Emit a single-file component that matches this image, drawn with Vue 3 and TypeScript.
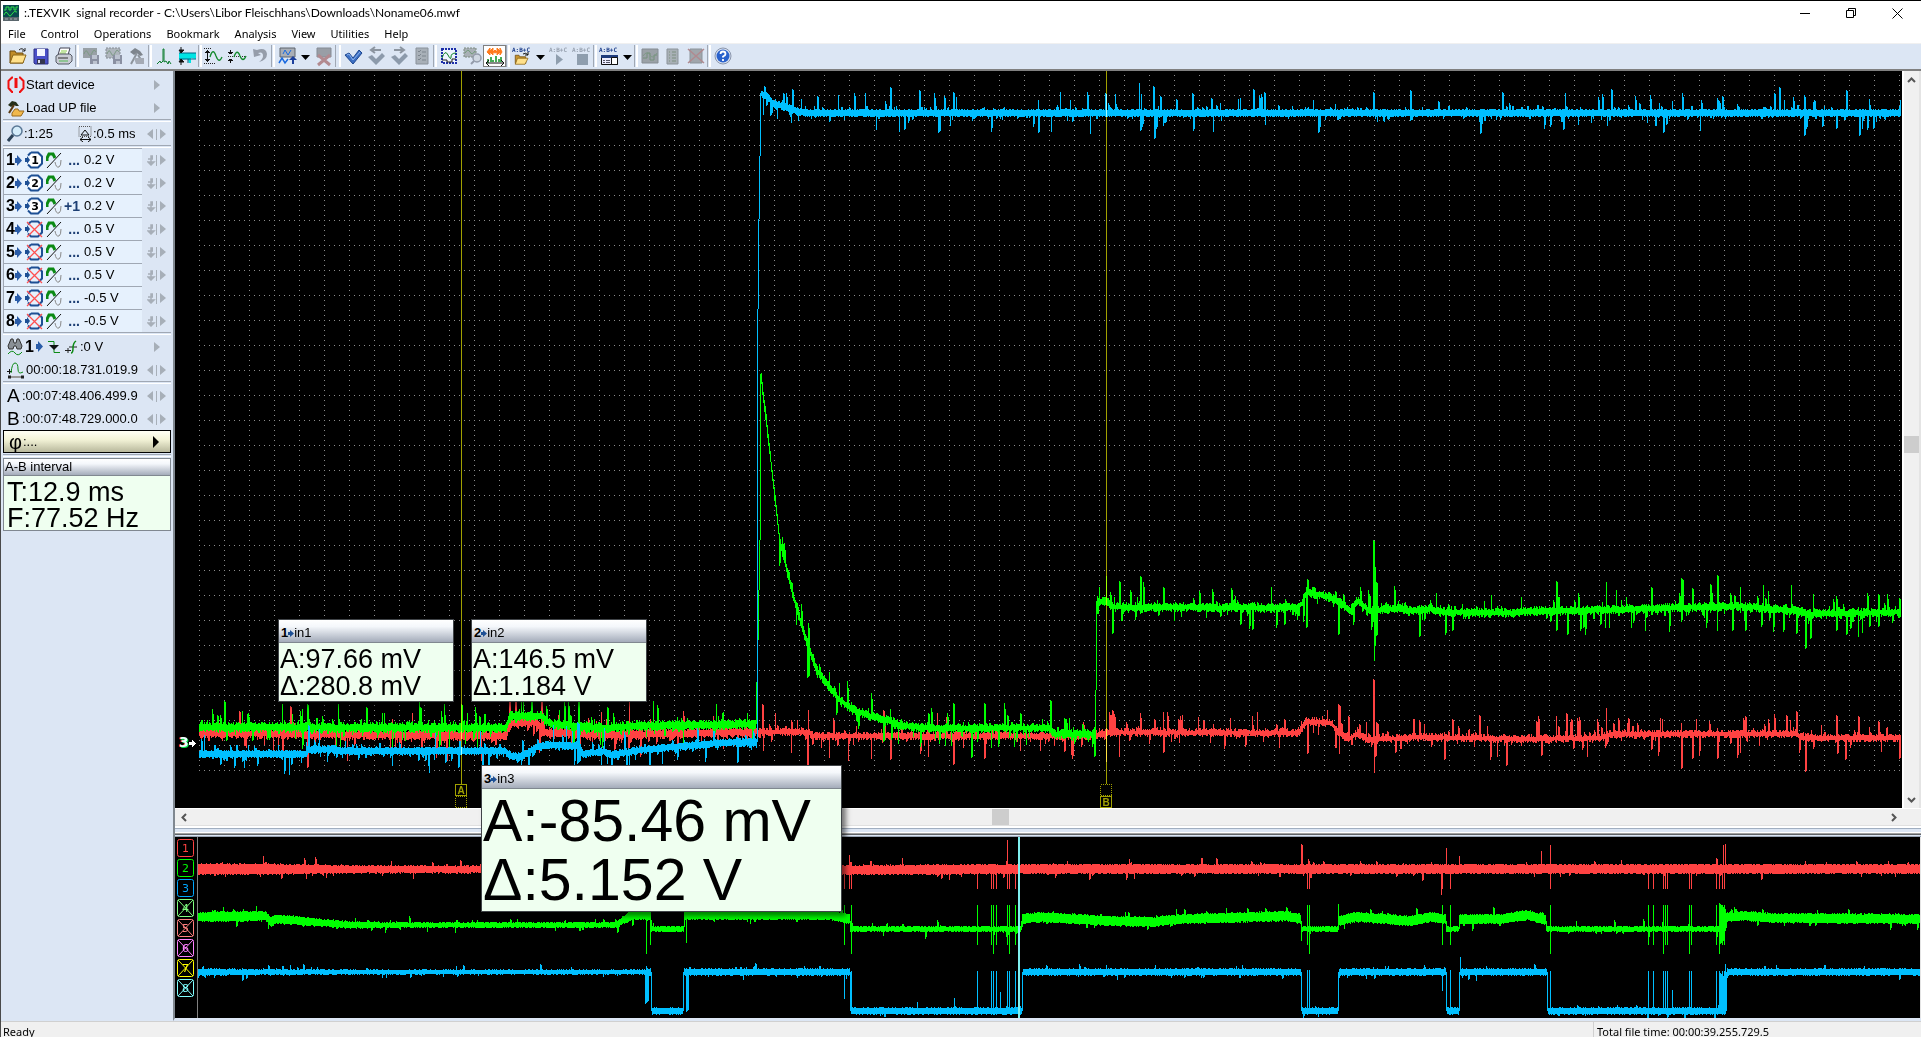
<script setup lang="ts">
type Point = [number, number]
type Spike = [number, number, number?]

interface TraceOptions {
  seed: number
  points: Point[]
  from: number
  to: number
  half: Point[]
  jitter: number
  rate: number
  reach: number
  spikes?: Spike[]
  step?: boolean
}

/* Small deterministic generator, so that the signals look the same on every load. */
function makeRandom(seed: number): () => number {
  let s = seed
  return () => {
    s = (s * 1664525 + 1013904223) % 4294967296
    return s / 4294967296
  }
}

function levelAt(points: Point[], x: number, step = false): number {
  for (let i = 1; i < points.length; i++) {
    const a = points[i - 1]
    const b = points[i]
    if (x < b[0]) return step ? a[1] : a[1] + ((b[1] - a[1]) * (x - a[0])) / (b[0] - a[0])
  }
  return points[points.length - 1][1]
}

/* One vertical stroke per pixel column: band, jitter, random peaks and the listed spikes. */
function trace(o: TraceOptions): string {
  const rnd = makeRandom(o.seed)
  const tops: number[] = []
  const bottoms: number[] = []
  let prev = levelAt(o.points, o.from, o.step)
  let carry = 0
  for (let x = o.from; x < o.to; x++) {
    const y = levelAt(o.points, x, o.step)
    const half = levelAt(o.half, x)
    let top = Math.min(y, (y + prev) / 2) - half - rnd() * o.jitter
    let bottom = Math.max(y, (y + prev) / 2) + half + rnd() * o.jitter
    let len = carry * 0.8
    carry = 0
    if (len === 0 && rnd() < o.rate) {
      const r = rnd()
      len = (2 + r * r * r * o.reach) * (rnd() < 0.5 ? -1 : 1)
      if (rnd() < 0.6) carry = len
    }
    if (len < 0) top += len
    else bottom += len
    if (Math.abs(y - prev) > 20) {
      top = Math.min(y, prev)
      bottom = Math.max(y, prev)
    }
    prev = y
    tops.push(top)
    bottoms.push(bottom)
  }
  for (const [x, y, w] of o.spikes ?? []) {
    for (let k = 0; k < (w ?? 2); k++) {
      const i = x - o.from + k
      if (i < 0 || i >= tops.length) continue
      tops[i] = Math.min(tops[i], y + k)
      bottoms[i] = Math.max(bottoms[i], y - k)
    }
  }
  return tops.map((t, i) => `M${o.from + i + 0.5} ${Math.round(t)}V${Math.round(bottoms[i])}`).join('')
}

const red = '#ff4242'
const green = '#00ff00'
const blue = '#00bfff'

const redMain = trace({
  seed: 11, from: 199, to: 1901, half: [[199, 2.5], [755, 2.5], [765, 1.5], [1901, 1.5]], jitter: 3, rate: 0.26, reach: 20,
  points: [[199, 733], [505, 736], [510, 723], [535, 722], [543, 732], [600, 735], [755, 732], [808, 732], [812, 736], [1095, 736], [1107, 732], [1297, 733], [1306, 721], [1330, 723], [1338, 732], [1348, 739], [1357, 733], [1367, 740], [1420, 737], [1520, 739], [1600, 738], [1610, 734], [1795, 734], [1806, 738], [1901, 738]],
  spikes: [[239, 711], [290, 706], [307, 768], [446, 762], [509, 701], [541, 701], [629, 701, 1], [762, 704], [808, 710, 1], [807, 766], [791, 753, 1], [829, 758, 1], [883, 710], [890, 760], [928, 757, 1], [953, 765], [984, 759], [1020, 751, 1], [1064, 752], [1071, 755, 1], [1106, 762, 1], [1112, 710], [1119, 757, 1], [1163, 753], [1178, 719], [1230, 718, 1], [1252, 716, 1], [1284, 719], [1307, 754], [1338, 704, 3], [1348, 716], [1373, 679, 2], [1374, 773, 1], [1375, 757], [1376, 722, 3], [1395, 753], [1413, 719], [1444, 760], [1452, 719], [1479, 715], [1506, 766], [1536, 721], [1556, 716, 1], [1566, 713], [1571, 719], [1587, 757, 1], [1606, 708, 1], [1628, 718], [1651, 750], [1681, 769], [1692, 759], [1717, 759], [1740, 753, 1], [1745, 716], [1768, 722], [1786, 715], [1796, 711], [1805, 772], [1836, 715], [1845, 760], [1858, 716], [1878, 721], [1899, 759]],
})

const greenMain = trace({
  seed: 27, from: 199, to: 1901, half: [[199, 2.5], [755, 2.5], [765, 2], [1901, 2]], jitter: 3, rate: 0.28, reach: 20,
  points: [[199, 727], [505, 728], [510, 716], [540, 716], [550, 724], [600, 728], [640, 726], [754, 724], [755, 724], [757, 640], [759, 540], [760, 374], [766, 423], [772, 478], [779, 540], [791, 590], [800, 622], [808, 648], [816, 670], [829, 688], [839, 700], [852, 710], [873, 717], [888, 721], [904, 726], [930, 728], [1049, 728], [1053, 734], [1094, 734], [1095, 690], [1096, 601], [1107, 602], [1110, 607], [1295, 608], [1301, 604], [1306, 592], [1320, 595], [1332, 598], [1338, 603], [1350, 610], [1357, 601], [1364, 607], [1370, 611], [1400, 608], [1410, 611], [1430, 609], [1440, 612], [1510, 613], [1530, 611], [1600, 610], [1700, 607], [1740, 606], [1760, 608], [1800, 611], [1806, 614], [1901, 612]],
  spikes: [[224, 701], [302, 709, 1], [307, 704], [247, 714], [366, 707], [461, 704, 2], [467, 713, 1], [445, 715, 1], [564, 704, 1], [578, 701], [607, 707], [653, 701, 1], [791, 582], [807, 678, 3], [829, 672, 1], [839, 683, 1], [883, 742], [890, 709, 1], [928, 713], [953, 703], [971, 758], [984, 703], [1020, 713], [1050, 700, 2], [1094, 757], [1112, 634], [1119, 581], [1140, 576], [1163, 587], [1106, 576, 1], [1240, 625], [1252, 630], [1271, 587, 1], [1284, 625], [1307, 579, 2], [1306, 628], [1338, 635], [1373, 540, 2], [1374, 661, 1], [1375, 567, 1], [1375, 646, 1], [1376, 582], [1376, 636], [1419, 637], [1452, 631], [1556, 581], [1556, 631], [1567, 635], [1583, 628], [1606, 582, 1], [1651, 587], [1681, 578, 3], [1692, 588], [1710, 584], [1717, 575], [1740, 587, 1], [1732, 631], [1745, 631], [1768, 591, 1], [1791, 585, 1], [1796, 634], [1805, 649, 2], [1810, 639], [1836, 631], [1846, 635], [1858, 637, 1], [1878, 594], [1878, 627], [1899, 598]],
})

const blueMain = trace({
  seed: 5, from: 199, to: 1901, half: [[199, 2.5], [1901, 2.5]], jitter: 2, rate: 0.24, reach: 15,
  points: [[199, 754], [305, 754], [307, 750], [330, 749], [345, 751], [505, 751], [509, 756], [520, 757], [537, 747], [547, 745], [577, 746], [582, 754], [603, 751], [610, 755], [640, 750], [675, 747], [720, 743], [755, 742], [756, 742], [757, 309], [758, 219], [760, 93], [767, 97], [772, 103], [785, 107], [795, 111], [805, 113], [1901, 113]],
  spikes: [[244, 768, 1], [308, 725, 2], [319, 729, 1], [429, 773, 1], [458, 768, 2], [480, 731, 1], [553, 725, 1], [577, 722, 3], [577, 764, 4], [604, 728, 1], [607, 764, 1], [629, 765, 1], [737, 763, 2], [763, 115, 1], [777, 119, 1], [770, 116], [783, 93], [792, 89], [817, 96], [838, 95, 1], [865, 93, 1], [890, 87, 2], [876, 130, 1], [904, 130], [919, 90], [938, 133, 3], [953, 92], [1038, 133], [1038, 100, 1], [1090, 134, 1], [1105, 93], [1139, 83, 1], [1140, 131, 2], [1153, 86, 2], [1154, 139, 2], [1160, 96], [1192, 93], [1211, 98], [1240, 98, 1], [1253, 89], [1264, 92], [1318, 133], [1373, 92], [1410, 90], [1480, 134], [1502, 92], [1563, 130], [1611, 89], [1663, 133], [1722, 96], [1774, 93], [1779, 87], [1804, 136], [1814, 100], [1836, 129], [1846, 90], [1859, 136], [1900, 100, 1]],
})

const dropouts = [646, 650, 844, 851, 977, 991, 993, 996, 1007, 1009, 1015, 1307, 1309, 1442, 1450, 1550, 1648, 1653, 1663, 1665, 1667, 1689, 1691, 1716, 1719, 1722, 1724]

const redOver = trace({
  seed: 41, from: 198, to: 1920, half: [[198, 4.5], [265, 4.5], [360, 3], [600, 2.5], [840, 4], [1920, 4]], jitter: 1.5, rate: 0.07, reach: 5,
  points: [[198, 869], [850, 870], [1020, 869], [1301, 869], [1920, 869]],
  spikes: [[263, 856, 1], [849, 855, 1], [849, 889, 1], [1007, 840, 1], [1301, 844, 2], [1446, 848, 1], [1459, 856, 1], [1441, 895, 1], [1541, 851, 1], [1550, 845, 1], [1723, 845, 1], [1725, 844, 1], ...dropouts.map((x): Spike => [x, 889, 1])],
})
const greenOver = trace({
  seed: 43, from: 198, to: 1920, jitter: 1.5, rate: 0.07, reach: 5,
  half: [[198, 4], [262, 4], [350, 2.5], [400, 2], [615, 2], [631, 4], [650, 4], [651, 2], [683, 2], [684, 4], [849, 4], [850, 2], [1020, 2], [1022, 4], [1300, 4], [1301, 2], [1337, 2], [1338, 4], [1445, 4], [1446, 2], [1458, 2], [1459, 4], [1545, 4], [1546, 2], [1725, 2], [1726, 4], [1920, 4]],
  points: [[198, 917], [265, 916], [270, 922], [276, 919], [350, 925], [615, 925], [631, 915], [645, 915], [650, 916], [651, 929], [683, 929], [684, 915], [830, 915], [849, 919], [850, 929], [1020, 929], [1022, 919], [1040, 917], [1111, 921], [1151, 922], [1183, 919], [1286, 916], [1300, 919], [1301, 929], [1337, 929], [1338, 921], [1355, 917], [1410, 921], [1430, 917], [1445, 919], [1446, 929], [1458, 929], [1459, 919], [1500, 919], [1527, 915], [1545, 920], [1546, 929], [1725, 929], [1726, 917], [1745, 916], [1770, 918], [1920, 919]],
  spikes: [[223, 907, 1], [686, 943, 1], [1338, 904, 1], [1301, 941, 1], [1719, 903, 7], [1719, 945, 6], ...dropouts.map((x): Spike => [x, 905, 1]), ...dropouts.map((x, i): Spike => [x, i % 3 === 0 ? 954 : 945, 1])],
})
const blueOver = trace({
  seed: 47, from: 198, to: 1920, half: [[198, 2.5], [400, 1.5], [640, 1.5], [651, 2.5], [1920, 2.5]], jitter: 1.5, rate: 0.06, reach: 4, step: true,
  points: [[198, 972], [651, 1011], [683, 972], [850, 1011], [1022, 972], [1301, 1011], [1338, 972], [1446, 1011], [1459, 972], [1547, 1011], [1726, 972], [1920, 972]],
  spikes: [[645, 1004, 4], [686, 1012, 3], [1460, 957, 1], [1719, 972, 7], [1725, 964, 1], [1672, 990, 1], [954, 998, 1], [1000, 992, 1], ...dropouts.map((x): Spike => [x, x > 1300 && x < 1320 ? 970 : 971, 1]), [844, 999, 1], [1442, 991, 1], [1450, 970, 1]],
})

const overviewTags = [
  { n: 1, color: '#ff4242', off: false },
  { n: 2, color: '#00ff00', off: false },
  { n: 3, color: '#00a8ff', off: false },
  { n: 4, color: '#80ff80', off: true },
  { n: 5, color: '#ff8080', off: true },
  { n: 6, color: '#ff80ff', off: true },
  { n: 7, color: '#ffff00', off: true },
  { n: 8, color: '#80ffff', off: true },
]

const menus = ['File', 'Control', 'Operations', 'Bookmark', 'Analysis', 'View', 'Utilities', 'Help']

const abc = (c: string) => `<text x="1" y="7" font-family="DejaVu Sans Mono, monospace" font-size="6" font-weight="700" fill="${c}">A:B+C</text>`
const folder = '<path d="M3 7h5l1 2h8v9H3z" fill="#c8952c" stroke="#6f4c10"/><path d="M6 11h14l-4 8H3z" fill="#ffe08a" stroke="#8a6416"/>'
const floppy = (x: number, y: number, a: string, b: string) => `<path d="M${x} ${y}h9v9h-9z" fill="${a}"/><path d="M${x + 2} ${y}h5v4h-5zM${x + 3} ${y + 6}h4v3h-4z" fill="${b}"/>`

const icons: Record<string, string> = {
  open: '<path d="M3 6h5l1 2h7v10H3z" fill="#c08c28" stroke="#6f4c10"/><path d="M6 10h13l-3 8H3z" fill="#ffe08a" stroke="#8a6416"/><path d="M12 5q3-3 6 1m0-3v3h-3" fill="none" stroke="#222"/>',
  save: '<path d="M4 4h14v15H5l-1-1z" fill="#4a50c8" stroke="#2c2f86"/><path d="M7 4h8v7H7z" fill="#f4f6ff"/><path d="M7 14h8v5H7z" fill="#33364e"/><path d="M8 15h2v3H8z" fill="#dde"/>',
  print: '<path d="M7 3h10l-2 7H5z" fill="#fff" stroke="#445"/><path d="M8 6h6M7 8h6" stroke="#8c4"/><path d="M3 11l3-2h11l2 2v5l-3 3H5l-2-2z" fill="#c9ccd4" stroke="#555a66"/><path d="M5 13h10" stroke="#333"/><path d="M6 16h9" stroke="#5b5"/>',
  saveWave: '<path d="M3 3h14v10H3z" fill="#98a0a6"/><path d="M4 9q2-6 4-1t4 0 4-1" fill="none" stroke="#7d9a86"/>' + floppy(10, 10, '#8a90a2', '#bcc3d0'),
  saveSel: '<path d="M3 3h14v10H3z" fill="#aeb5bd" stroke="#838b94" stroke-dasharray="2 1"/><path d="M4 9q2-6 4-1t4 0 4-1" fill="none" stroke="#7d9a86"/>' + floppy(10, 10, '#8a90a2', '#bcc3d0'),
  hammer: '<path d="M4 7l5-4 5 3 3 4-3 1-3-3-3 2z" fill="#7e858d"/><path d="M11 8L5 19M12 10l5 8" stroke="#8d949c" stroke-width="2"/><path d="M8 13h10v6H10z" fill="#a4aab4"/>',
  spike: '<path d="M4 19l3-3 1 2 2-2V4h1v13l2-1 2 3 1-3 2 3" fill="none" stroke="#087a2a"/>',
  band: '<path d="M3 8h17v6l-5-1v5h-2l-1-4-9 1z" fill="#00e4e4"/><path d="M3 8h17M3 14h17M12 14v4" stroke="#068" fill="none"/><path d="M5 2v5M5 15v5M3 5h5L5 8zM3 17h5l-3-3z" stroke="#111" fill="#111"/>',
  waveY: '<path d="M1 3.500h8M1 18.500h12" stroke="#222" stroke-dasharray="1 1"/><path d="M4.500 5v12M2 7.500h5M3 6.500h3M2 14.500h5M3 15.500h3" fill="none" stroke="#111"/><path d="M7 12q3-10 6-1 3 8 6 1" fill="none" stroke="#148a2c" stroke-width="1.300"/>',
  waveX: '<path d="M2 11.500h18" stroke="#333" stroke-dasharray="1 1"/><path d="M4.500 5v4M4.500 14v4M2 7.500h5M3 8.500h3M2 15.500h5M3 14.500h3" fill="none" stroke="#111"/><path d="M8 12q3-9 6-1 3 7 6 0" fill="none" stroke="#148a2c" stroke-width="1.300"/>',
  undo: '<path d="M4 4l1 8 7-2-3-2q5-2 5 3 0 3-4 6 8-2 8-8-1-7-10-4z" fill="#959daa"/>',
  chart: '<path d="M4 3h15v9H4z" fill="#a9aeb6" stroke="#5e646c"/><path d="M7 9l2-4 3 5 3-5" fill="none" stroke="#1a6ae0"/><path d="M3 18l3-5 3 5 3-4" fill="none" stroke="#1a6ae0" stroke-width="1.500"/><path d="M13 15h3v4h2v-4h3l-4-4z" fill="#1c3f9c"/>',
  chartX: '<path d="M4 3h14v9H4z" fill="#999ea6" stroke="#858b94"/><path d="M5 10l12 10M17 10L5 20" stroke="#b28a90" stroke-width="3"/>',
  check: '<path d="M3 10l4-2 4 5 6-8 3 3-9 11z" fill="#3d70c4" stroke="#1c4690"/><path d="M5 10l2-1 4 6 7-8" fill="none" stroke="#8db4ee"/>',
  checkL: '<path d="M3 12l4-2 4 4 6-6 3 3-9 9z" fill="#8c9aab"/><path d="M16 5H7m3-3L6 5l4 3" fill="none" stroke="#8c95a0" stroke-width="2"/>',
  checkR: '<path d="M3 12l4-2 4 4 6-6 3 3-9 9z" fill="#8c9aab"/><path d="M6 5h9m-3-3l4 3-4 3" fill="none" stroke="#8c95a0" stroke-width="2"/>',
  list: '<path d="M5 3h12v16H5z" fill="#a8b0b8" stroke="#8a929b"/><path d="M7 6l1 1 2-2M7 10l1 1 2-2M7 14l1 1 2-2M11 7h4M11 11h4M11 15h4" fill="none" stroke="#7c858e"/>',
  select: '<path d="M4 4h14v14H4z" fill="#eef4ff" stroke="#1c2ea8" stroke-width="2" stroke-dasharray="2 1"/><path d="M4 13q3-9 6-3t3 2 5-4" fill="none" stroke="#0a8020"/><path d="M4 15h5v2h5v-3h4" fill="none" stroke="#222"/>',
  zoomSel: '<path d="M3 3h12v9H3z" fill="#a9b0b6" stroke="#7d8a80" stroke-dasharray="2 1"/><path d="M4 8q3-5 5-1t5-1" fill="none" stroke="#6f9a78"/><circle cx="16" cy="13" r="4" fill="#d0d8e2" stroke="#949cab" stroke-width="1.500"/><path d="M13 16l-3 3" stroke="#949cab" stroke-width="2"/>',
  fit: '<path d="M3 7l3-4v3l3-3v4l2-2 2 2V3l3 3V3l2 4-2 3V7l-3 3V7l-2 1-2-1v3L6 7v3z" fill="#ff7a1c" stroke="#ff7a1c"/><path d="M4 14v4M7 12v5M9 15v2M12 11v6M15 14v3M17 12v5" stroke="#0a9020" stroke-width="1.500"/><path d="M2 18h18M5 15l-3 3 3 3M17 15l3 3-3 3" fill="none" stroke="#111"/>',
  abcOpen: abc('#20408c') + '<g transform="translate(2 5) scale(.75)">' + folder + '</g><path d="M12 9q3-2 5 1m0-3v3h-3" fill="none" stroke="#111"/>',
  abcPlay: abc('#98a2b0') + '<path d="M8 9l7 5.500-7 5.500z" fill="#8f9eae"/>',
  abcStop: abc('#98a2b0') + '<path d="M6 9h11v11H6z" fill="#8f9eae"/>',
  abcWin: abc('#20408c') + '<path d="M3.500 10.500h16v9h-16z" fill="#eef" stroke="#111"/><path d="M3 10h17v3H3z" fill="#1f3c7c"/><path d="M13.500 12.500h6v7h-6z" fill="#fff" stroke="#111"/><path d="M5 15.500h2m1 0h4M5 17.500h2m1 0h4" stroke="#556"/>',
  scr: '<path d="M3 4h16v14H3z" fill="#9aa1a7" stroke="#858c93"/><path d="M4 13h4V8h3v7h4v-5h3" fill="none" stroke="#74907c"/><path d="M4 11q4-6 7-1t7-2" fill="none" stroke="#7f9a88"/>',
  page: '<path d="M5 4h11v15H5z" fill="#a8b0b6" stroke="#8c949b"/><path d="M7 7h1m2 0h4M7 10h1m2 0h4M7 13h1m2 0h4M7 16h1m2 0h4" stroke="#7c8f80"/>',
  pageX: '<path d="M5 4h12v14H5z" fill="#a0a6ac" stroke="#8c949b"/><path d="M3 4l16 14M19 4L3 18" stroke="#b08a90" stroke-width="1.500"/>',
  help: '<circle cx="11" cy="11" r="8" fill="#d9e2f2" stroke="#8a96ac"/><circle cx="11" cy="11" r="6.500" fill="#2a62cc"/><path d="M8.500 9q0-2.500 2.500-2.500T13.500 9q0 1.500-2.500 2.500v1M11 14v2" fill="none" stroke="#fff" stroke-width="1.800"/>',
}

interface Tool { id?: string; label?: string; kind?: 'sep' | 'grip' | 'drop'; off?: boolean; on?: boolean }
const sep: Tool = { kind: 'sep' }
const tools: Tool[] = [
  { id: 'open', label: 'Open' }, { id: 'save', label: 'Save' }, { id: 'print', label: 'Print' }, sep,
  { id: 'saveWave', label: 'Save signal', off: true }, { id: 'saveSel', label: 'Save selection', off: true }, { id: 'hammer', label: 'Tools', off: true }, sep,
  { id: 'spike', label: 'Peak' }, { id: 'band', label: 'Band' }, sep,
  { id: 'waveY', label: 'Vertical fit' }, { id: 'waveX', label: 'Zero fit' }, { id: 'undo', label: 'Undo', off: true }, sep,
  { id: 'chart', label: 'Chart' }, { kind: 'drop', label: 'Chart options' }, { id: 'chartX', label: 'Remove chart', off: true }, { kind: 'grip' },
  { id: 'check', label: 'Bookmark' }, { id: 'checkL', label: 'Previous bookmark', off: true }, { id: 'checkR', label: 'Next bookmark', off: true }, { id: 'list', label: 'Bookmark list', off: true }, sep,
  { id: 'select', label: 'Select' }, { id: 'zoomSel', label: 'Zoom selection', off: true }, { id: 'fit', label: 'Fit', on: true }, sep,
  { id: 'abcOpen', label: 'Open formula' }, { kind: 'drop', label: 'Formula options' }, { id: 'abcPlay', label: 'Run formula', off: true }, { id: 'abcStop', label: 'Stop formula', off: true }, sep,
  { id: 'abcWin', label: 'Formula window' }, { kind: 'drop', label: 'Window options' }, sep,
  { id: 'scr', label: 'Screen', off: true }, { id: 'page', label: 'Page', off: true }, { id: 'pageX', label: 'Delete page', off: true }, sep,
  { id: 'help', label: 'Help' },
]

const channels = [
  { n: 1, on: true, shift: '...', value: '0.2 V' },
  { n: 2, on: true, shift: '...', value: '0.2 V' },
  { n: 3, on: true, shift: '+1', value: '0.2 V' },
  { n: 4, on: false, shift: '...', value: '0.5 V' },
  { n: 5, on: false, shift: '...', value: '0.5 V' },
  { n: 6, on: false, shift: '...', value: '0.5 V' },
  { n: 7, on: false, shift: '...', value: '-0.5 V' },
  { n: 8, on: false, shift: '...', value: '-0.5 V' },
]

const readouts = [
  { n: 1, name: 'in1', a: 'A:97.66 mV', d: 'Δ:280.8 mV' },
  { n: 2, name: 'in2', a: 'A:146.5 mV', d: 'Δ:1.184 V' },
  { n: 3, name: 'in3', a: 'A:-85.46 mV', d: 'Δ:5.152 V' },
]
</script>

<template>
  <div class="app">
    <header class="titlebar">
      <svg class="logo" width="16" height="16" viewBox="0 0 16 16" aria-hidden="true">
        <rect width="16" height="16" fill="#0c4a4e" />
        <path d="M1 5h2V2h3v3h2V2h3v3h2V2h2M1 10q2-5 4-1t4 0 5-2" fill="none" stroke="#2ee04a" />
        <path d="M0 12h16v4H0z" fill="#5a666c" /><path d="M2 14h3m2 0h2m2 0h3" stroke="#a4aeb4" />
      </svg>
      <h1>:.TEXVIK&nbsp; signal recorder - C:\Users\Libor Fleischhans\Downloads\Noname06.mwf</h1>
      <div class="winctl">
        <button aria-label="Minimize"><svg width="11" height="11"><path d="M0 5.500h10" stroke="#000" /></svg></button>
        <button aria-label="Restore"><svg width="11" height="11"><path d="M.5 2.500h7v7h-7zM2.500 2.500v-2h7v7h-2" fill="none" stroke="#000" /></svg></button>
        <button aria-label="Close"><svg width="11" height="11"><path d="M.5.5l10 10M10.500.5l-10 10" stroke="#000" /></svg></button>
      </div>
    </header>

    <nav class="menubar">
      <button v-for="m in menus" :key="m">{{ m }}</button>
    </nav>

    <div class="toolbar">
      <template v-for="(t, i) in tools" :key="i">
        <span v-if="t.kind === 'sep'" class="tsep"></span>
        <span v-else-if="t.kind === 'grip'" class="tsep grip"></span>
        <button v-else-if="t.kind === 'drop'" class="drop" :aria-label="t.label">
          <svg width="9" height="5"><path d="M0 0h9L4.500 5z" fill="#000" /></svg>
        </button>
        <button v-else class="tool" :class="{ on: t.on }" :aria-label="t.label" :disabled="t.off">
          <svg width="22" height="22" viewBox="0 0 22 22" v-html="icons[t.id!]"></svg>
        </button>
      </template>
    </div>

    <main class="main">
      <aside class="side">
        <div class="row">
          <button class="cell">
            <svg width="18" height="18" viewBox="0 0 18 18"><path d="M6 1.500H5L1.500 5v7L5 16h1m6 0h1l3.500-4V5L13 1.500h-1" fill="none" stroke="#f01010" stroke-width="2" /><path d="M9 2v10" stroke="#f01010" stroke-width="3" /></svg>
            <span>Start device</span>
          </button>
          <svg class="nudge" width="19" height="12"><path d="M7 1l6 5-6 5z" fill="#a7afb8" /></svg>
        </div>
        <div class="row">
          <button class="cell">
            <svg width="18" height="18" viewBox="0 0 18 18"><path d="M5 14l3-4h3l1 2h5l-3 5H5z" fill="#f0b84c" stroke="#9a6a1c" /><path d="M1 6l4-4 4 1 3 4-3 0-2-1-3 2z" fill="#27301a" /><path d="M7 6L2 14" stroke="#5b3a12" stroke-width="2" /></svg>
            <span>Load UP file</span>
          </button>
          <svg class="nudge" width="19" height="12"><path d="M7 1l6 5-6 5z" fill="#a7afb8" /></svg>
        </div>
        <hr />
        <div class="row">
          <div class="cell scale">
            <svg width="17" height="18" viewBox="0 0 17 18"><circle cx="10" cy="6" r="5" fill="#d4ecfa" stroke="#5a7896" stroke-width="1.500" /><path d="M6 10l-5 6" stroke="#2c4258" stroke-width="3" /></svg>
            <span class="zoom">:1:25</span>
            <svg width="15" height="16" viewBox="0 0 15 16"><path d="M1 .5h12v10H1z" fill="none" stroke="#555" stroke-dasharray="1 1" /><path d="M3 9h8L7 4z" fill="none" stroke="#111" /><path d="M2 13.500h11M5 11l-3 2.500L5 16M10 11l3 2.500-3 2.500" fill="none" stroke="#111" /></svg>
            <span>:0.5 ms</span>
          </div>
          <svg class="nudge" width="19" height="12"><path d="M6 1v10L0 6zM13 1v10l6-5z" fill="#a7afb8" /><path d="M9.500 1v11" stroke="#a7afb8" stroke-width="1" /></svg>
        </div>
        <hr />
        <div v-for="c in channels" :key="c.n" class="row channel">
          <button class="cell">
            <b class="num">{{ c.n }}</b>
            <svg width="8" height="11" viewBox="0 0 8 11"><path d="M0 3h2V0l5 5.500L2 11V8H0z" fill="#2a5ca8" /></svg>
            <svg class="oct" width="19" height="18" viewBox="0 0 19 18">
              <path d="M6 1.500h7l4 4v7l-4 4H6l-3-3M3 4.500l3-3" :fill="c.on ? '#fff' : 'none'" stroke="#1d4f94" stroke-width="2" />
              <path d="M0 7h2V5l3 4-3 4v-2H0z" fill="#1d4f94" />
              <text v-if="c.on" x="10" y="13" text-anchor="middle" font-family="DejaVu Sans, sans-serif" font-weight="700" font-size="11">{{ c.n }}</text>
              <path v-else d="M2 2l15 15M17 2L2 17" stroke="#ff5050" stroke-width="1.300" />
            </svg>
            <svg width="16" height="18" viewBox="0 0 16 18"><path d="M1 10V7l2-4h4l2 4" fill="none" stroke="#0b8a14" stroke-width="3" /><path d="M9 11q1 6 4 5 2-1 2-7" fill="none" stroke="#888" /><path d="M1 17L15 2" stroke="#111" /></svg>
            <b class="shift">{{ c.shift }}</b>
            <span>{{ c.value }}</span>
          </button>
          <svg class="nudge" width="19" height="12"><path d="M6 2H4v3h2M4 5H1m3 0v5M1 8h6L4 11z" stroke="#a7afb8" stroke-width="1.500" fill="#a7afb8" /><path d="M13 1v10l6-5z" fill="#a7afb8" /><path d="M9.500 1v11" stroke="#a7afb8" /></svg>
        </div>
        <hr />
        <div class="row">
          <div class="cell trig">
            <svg width="16" height="18" viewBox="0 0 16 18"><path d="M4 1h2l1 4h2l1-4h2l3 7-1 3h-4L9 8H7l-1 3H2L1 8z" fill="#8a9096" stroke="#333" /><path d="M1 16q4-5 7-1t7-1" fill="none" stroke="#0b8a14" /></svg>
            <b class="num">1</b>
            <svg width="8" height="11" viewBox="0 0 8 11"><path d="M0 3h2V0l5 5.500L2 11V8H0z" fill="#2a5ca8" /></svg>
            <svg class="gap" width="13" height="14" viewBox="0 0 13 14"><path d="M0 1.500h6v11h6" fill="none" stroke="#0b8a14" /><path d="M1 5h10L6 10z" fill="#111" /></svg>
            <svg class="gap" width="13" height="14" viewBox="0 0 13 14"><path d="M0 10.500h6M3 8v5M4 7h8" stroke="#222" /><path d="M6 13q2 0 2-5t3-7" fill="none" stroke="#0b8a14" stroke-width="1.500" /></svg>
            <span>:0 V</span>
          </div>
          <svg class="nudge" width="19" height="12"><path d="M7 1l6 5-6 5z" fill="#a7afb8" /></svg>
        </div>
        <div class="row">
          <div class="cell">
            <svg width="18" height="18" viewBox="0 0 18 18"><path d="M0 10.500h5M2.500 8v5" stroke="#111" /><path d="M4 12q1-10 4-10t3 6 5 3" fill="none" stroke="#0b8a14" /><path d="M1 16h16" stroke="#999" stroke-width="2" /><path d="M1 16h3m10 0h3" stroke="#222" stroke-width="3" /></svg>
            <span>00:00:18.731.019.9</span>
          </div>
          <svg class="nudge" width="19" height="12"><path d="M6 1v10L0 6zM13 1v10l6-5z" fill="#a7afb8" /><path d="M9.500 1v11" stroke="#a7afb8" /></svg>
        </div>
        <hr />
        <div v-for="m in [['A', '00:07:48.406.499.9'], ['B', '00:07:48.729.000.0']]" :key="m[0]" class="row">
          <div class="cell">
            <span class="cursor">{{ m[0] }}</span><span>:{{ m[1] }}</span>
          </div>
          <svg class="nudge" width="19" height="12"><path d="M6 1v10L0 6zM13 1v10l6-5z" fill="#a7afb8" /><path d="M9.500 1v11" stroke="#a7afb8" /></svg>
        </div>
        <button class="phase">
          <span class="phi">φ</span><span class="dots">:...</span>
          <svg width="7" height="12"><path d="M0 0l6 6-6 6z" fill="#000" /></svg>
        </button>
        <hr class="wide" />
        <section class="interval">
          <h2>A-B interval</h2>
          <p>T:12.9 ms</p>
          <p>F:77.52 Hz</p>
        </section>
      </aside>

      <div class="right">
        <div class="scope">
          <svg class="plot" viewBox="175 71 1727 737" preserveAspectRatio="none" shape-rendering="crispEdges">
            <defs>
              <pattern id="cols" x="199" y="75" width="25" height="5" patternUnits="userSpaceOnUse"><rect width="1" height="1" fill="#8c8c8c" /></pattern>
              <pattern id="rows" x="199" y="95" width="5" height="25" patternUnits="userSpaceOnUse"><rect width="1" height="1" fill="#8c8c8c" /></pattern>
            </defs>
            <rect x="199" y="75" width="1701" height="696" fill="url(#cols)" />
            <rect x="199" y="95" width="1701" height="676" fill="url(#rows)" />
            <path :d="redMain" :stroke="red" />
            <path :d="greenMain" :stroke="green" />
            <path :d="blueMain" :stroke="blue" />
            <g class="cursors" stroke="#a0a000" fill="none">
              <path d="M461.500 71V784M1106.500 71V784" />
              <rect x="455.500" y="784.500" width="11" height="11" />
              <rect x="455.500" y="796.500" width="11" height="11" stroke-dasharray="1 1" />
              <rect x="1100.500" y="784.500" width="11" height="11" stroke-dasharray="1 1" />
              <rect x="1100.500" y="796.500" width="11" height="11" />
            </g>
            <text x="461" y="794" class="mark">A</text>
            <text x="1106" y="806" class="mark">B</text>
            <g class="origin">
              <text x="178" y="747" fill="#ff3030">3</text>
              <text x="180" y="748" fill="#00e040">3</text>
              <text x="179" y="747" fill="#e8ffff">3</text>
              <path d="M189 742h3v-3l4 4.500-4 4.500v-3h-3z" fill="#fff" />
            </g>
          </svg>
          <div class="vscroll">
            <button aria-label="Scroll up"><svg width="9" height="6"><path d="M1 5l3.500-3.500L8 5" fill="none" stroke="#555" stroke-width="2" /></svg></button>
            <span class="v1"></span><i></i><span class="v2"></span>
            <button aria-label="Scroll down"><svg width="9" height="6"><path d="M1 1l3.500 3.500L8 1" fill="none" stroke="#555" stroke-width="2" /></svg></button>
          </div>
        </div>
        <div class="hscroll">
          <button aria-label="Scroll left"><svg width="6" height="9"><path d="M5 1L1.500 4.500 5 8" fill="none" stroke="#555" stroke-width="2" /></svg></button>
          <span class="h1"></span><i></i><span class="h2"></span>
          <button aria-label="Scroll right"><svg width="6" height="9"><path d="M1 1l3.500 3.500L1 8" fill="none" stroke="#555" stroke-width="2" /></svg></button>
        </div>
        <div class="splitter"></div>
        <div class="overview">
          <svg class="tags" width="23" height="181" viewBox="175 837 23 181">
            <g v-for="(t, i) in overviewTags" :key="t.n" :stroke="t.color" fill="none">
              <rect x="177.500" :y="839.5 + i * 20" width="16" height="17" rx="2" />
              <text x="185.500" :y="852 + i * 20" text-anchor="middle" stroke="none" :fill="t.color" font-size="11">{{ t.n }}</text>
              <path v-if="t.off" :d="`M178 ${840 + i * 20}l15 16m0-16l-15 16`" />
            </g>
            <path d="M197.500 837v181" stroke="#808080" />
          </svg>
          <svg class="plot" viewBox="198 837 1722 181" preserveAspectRatio="none" shape-rendering="crispEdges">
            <path :d="redOver" :stroke="red" />
            <path :d="greenOver" :stroke="green" />
            <path :d="blueOver" :stroke="blue" />
            <path d="M1019 837v181" stroke="#80f0f0" stroke-width="2" />
          </svg>
        </div>

        <section v-for="r in readouts" :key="r.n" class="readout" :class="'r' + r.n">
          <h2><b>{{ r.n }}</b><svg width="6" height="7"><path d="M0 2h2V0l4 3.500L2 7V5H0z" fill="#1d4f94" /></svg>{{ r.name }}</h2>
          <p>{{ r.a }}</p>
          <p>{{ r.d }}</p>
        </section>
      </div>
    </main>

    <footer class="status">
      <span class="ready">Ready</span>
      <span class="total">Total file time: 00:00:39.255.729.5</span>
    </footer>
  </div>
</template>

<style>
body {
  margin: 0;
  overflow: hidden;
}
</style>

<style scoped>
* {
  box-sizing: border-box;
}
.app {
  height: 100vh;
  display: flex;
  flex-direction: column;
  border-top: 1px solid #000;
  border-left: 1px solid #4a4a4a;
  background: #fff;
  color: #000;
  font: 11px/16px "Noto Sans", "Open Sans", sans-serif;
}
button {
  border: 0;
  padding: 0;
  margin: 0;
  background: none;
  font: inherit;
  color: inherit;
}
svg {
  display: block;
  flex: none;
}
h1, h2, p {
  margin: 0;
  font: inherit;
}
.titlebar {
  display: flex;
  align-items: center;
  height: 24px;
  padding: 0 1px 0 2px;
  gap: 5px;
}
.titlebar h1 {
  flex: 1;
  font: 12px/16px Lato, Roboto, sans-serif;
  white-space: nowrap;
}
.winctl {
  display: flex;
}
.winctl button {
  width: 46px;
  height: 22px;
  display: grid;
  place-items: center;
}
.menubar {
  display: flex;
  gap: 15px;
  height: 18px;
  padding-left: 7px;
  align-items: center;
}
.toolbar {
  display: flex;
  align-items: center;
  height: 28px;
  padding: 0 0 2px 5px;
  background: #dce6f4;
  border-top: 1px solid #f0f0f0;
  border-bottom: 2px solid #808080;
}
.tool {
  width: 23px;
  height: 22px;
  display: grid;
  place-items: center;
}
.tool.on {
  background: #fff;
  outline: 1px solid #808080;
  outline-offset: -1px;
}
.drop {
  width: 14px;
  height: 22px;
  display: grid;
  place-items: center;
  padding-top: 4px;
}
.tsep {
  width: 4px;
  height: 22px;
  border-left: 1px solid #a0a8b4;
  border-right: 2px solid #fff;
  background: #dce6f4;
}
.grip {
  width: 6px;
}
.main {
  flex: 1;
  display: flex;
  min-height: 0;
}
.side {
  width: 172px;
  flex: none;
  padding: 2px 2px 0;
  background: #dce6f4;
  font: 13px/16px "Liberation Sans", Arial, sans-serif;
}
.row {
  display: flex;
  align-items: center;
  height: 23px;
}
.cell {
  width: 139px;
  height: 23px;
  display: flex;
  align-items: center;
  padding-left: 4px;
  gap: 1px;
  white-space: nowrap;
}
.nudge {
  margin-left: 5px;
}
hr {
  height: 3px;
  margin: 0;
  border: 0;
  border-top: 1px solid #a0a8b4;
  border-bottom: 1px solid #fff;
}
hr.wide {
  margin: 1px 0;
}
.scale {
  gap: 0;
}
.zoom {
  width: 54px;
}
.channel .cell {
  background: #e6f1fd;
  border-top: 1px solid #a0a8b4;
  border-left: 1px solid #a0a8b4;
  padding-left: 2px;
  gap: 0;
}
.num {
  width: 9px;
  font-size: 16px;
}
.oct {
  margin: 0 2px;
}
.shift {
  width: 21px;
  text-align: right;
  padding-right: 3px;
  font-size: 14px;
  color: #1d3f74;
}
.channel span {
  padding-left: 1px;
}
.trig {
  gap: 2px;
}
.gap {
  margin-left: 2px;
}
.cursor {
  width: 14px;
  font-size: 19px;
}
.phase {
  display: flex;
  align-items: center;
  width: 168px;
  height: 23px;
  padding: 0 10px 0 4px;
  border: 1px solid #000;
  background: linear-gradient(#fffff4, #f4f4d8 40%, #b8b89c);
}
.phi {
  width: 15px;
  font-size: 20px;
}
.dots {
  flex: 1;
  text-align: left;
}
.interval {
  height: 73px;
  overflow: hidden;
  border: 1px solid #808890;
  background: #effff0;
  font-size: 27px;
  line-height: 26px;
}
.interval h2, .readout h2 {
  background: linear-gradient(#fff, #f4f7fb 30%, #a4acba);
  border-bottom: 1px solid #808890;
  font-size: 13px;
}
.interval h2 {
  height: 17px;
  margin-bottom: 3px;
  padding-left: 1px;
  line-height: 16px;
}
.interval p {
  padding-left: 3px;
}
.right {
  flex: 1;
  min-width: 0;
  display: flex;
  flex-direction: column;
  position: relative;
  border-left: 2px solid #808890;
  border-bottom: 3px solid #dce6f4;
  background: #fff;
}
.scope {
  flex: 1;
  min-height: 0;
  display: flex;
  background: #000;
}
.plot {
  flex: 1;
  min-width: 0;
  width: 100%;
  height: 100%;
}
.cursors {
  mix-blend-mode: plus-lighter;
}
.mark {
  font: 700 10px "Liberation Sans", sans-serif;
  fill: #a0a000;
  text-anchor: middle;
}
.origin {
  font: 700 14px "DejaVu Sans", sans-serif;
}
.vscroll {
  width: 19px;
  flex: none;
  display: flex;
  flex-direction: column;
  background: #f0f0f0;
  border-left: 2px solid #fff;
  border-right: 2px solid #e4e4e4;
}
.vscroll button {
  height: 17px;
  display: grid;
  place-items: center;
}
.vscroll i {
  height: 17px;
  background: #cdcdcd;
}
.v1 {
  flex: 348;
}
.v2 {
  flex: 338;
}
.hscroll {
  display: flex;
  height: 18px;
  flex: none;
  padding-right: 19px;
  background: #f0f0f0;
  border-top: 1px solid #fff;
  border-bottom: 1px solid #e0e0e0;
}
.hscroll button {
  width: 17px;
  display: grid;
  place-items: center;
}
.hscroll i {
  width: 17px;
  background: #cdcdcd;
}
.h1 {
  flex: 800;
}
.h2 {
  flex: 876;
}
.splitter {
  height: 11px;
  flex: none;
  background: linear-gradient(#fff 2px, #a0aec0 2px 3px, #dce6f4 3px 6px, #fff 6px 7px, #a0a0a0 7px 8px, #606468 8px 9px, #dce6f4 9px 10px, #98a4b4 10px);
}
.overview {
  display: flex;
  height: 181px;
  flex: none;
  background: #000;
  border-right: 1px solid #e4e4e4;
  font-family: "DejaVu Sans", sans-serif;
}
.readout {
  position: absolute;
  overflow: hidden;
  border: 1px solid #404448;
  background: #effff0;
  font: 27px/27px "Liberation Sans", Arial, sans-serif;
  white-space: nowrap;
  box-shadow: 4px 4px 5px rgba(0, 0, 0, 0.5);
}
.readout h2 {
  display: flex;
  align-items: center;
  height: 23px;
  margin-bottom: 3px;
  padding: 4px 0 0 2px;
  line-height: 16px;
}
.readout p {
  padding-left: 1px;
}
.r1, .r2 {
  top: 548px;
  width: 176px;
  height: 83px;
}
.r1 {
  left: 103px;
}
.r2 {
  left: 296px;
}
.r3 {
  left: 306px;
  top: 694px;
  width: 361px;
  height: 147px;
  font-size: 59px;
  line-height: 59px;
}
.status {
  display: flex;
  height: 16px;
  flex: none;
  overflow: hidden;
  background: #f0f0f0;
  border-top: 1px solid #d0d0d0;
  line-height: 20px;
}
.ready {
  flex: 1;
  padding-left: 2px;
}
.total {
  width: 328px;
  padding-left: 3px;
  border-left: 1px solid #d0d0d0;
  white-space: nowrap;
}
</style>
